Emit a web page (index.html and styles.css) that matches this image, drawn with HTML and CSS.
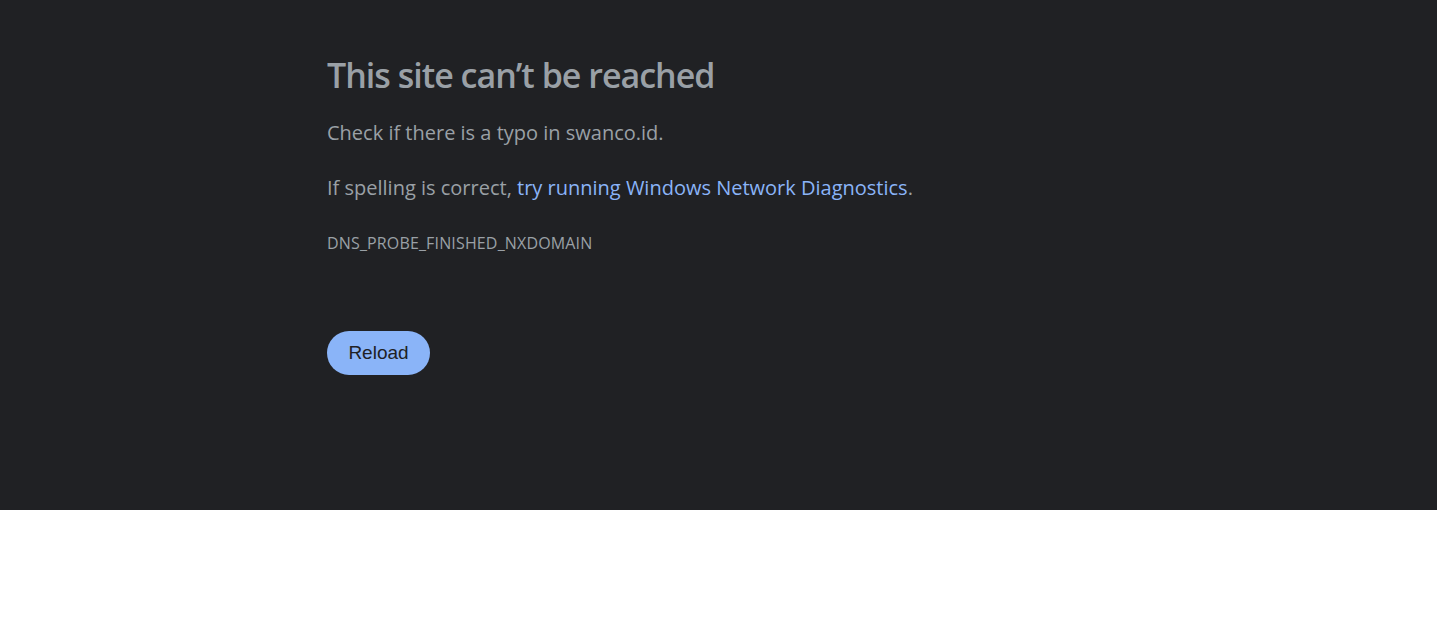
FILE: index.html
```html
<!DOCTYPE html>
<html lang="en">
<head>
<meta charset="utf-8">
<title>swanco.id</title>
<link rel="stylesheet" href="styles.css">
</head>
<body>
<div class="page">
  <div class="wrapper">
    <h1 class="title">This site can’t be reached</h1>
    <p class="line">Check if there is a typo in swanco.id.</p>
    <p class="line">If spelling is correct, <a class="link" href="#">try running Windows Network Diagnostics</a>.</p>
    <div class="code">DNS_PROBE_FINISHED_NXDOMAIN</div>
    <div class="actions">
      <button class="reload">Reload</button>
    </div>
  </div>
</div>
</body>
</html>
```
FILE: styles.css
```css
html, body {
  margin: 0;
  padding: 0;
  background: #ffffff;
}
.page {
  width: 1437px;
  height: 510px;
  background: #202124;
  box-sizing: border-box;
  padding-top: 52px;
  padding-left: 327px;
  font-family: "Open Sans", "Noto Sans", sans-serif;
}
.wrapper {
  display: flex;
  flex-direction: column;
  align-items: flex-start;
}
.title {
  margin: 0;
  font-size: 34px;
  font-weight: 600;
  line-height: 46px;
  color: #9aa0a6;
  letter-spacing: -1px;
}
.line {
  margin: 14px 0 0;
  font-size: 20px;
  line-height: 41px;
  color: #9aa0a6;
}
.line + .line {
  margin-top: 14px;
}
.link {
  color: #8ab4f8;
  text-decoration: none;
}
.code {
  margin-top: 15px;
  font-size: 16px;
  line-height: 41px;
  color: #9aa0a6;
  letter-spacing: 0.15px;
}
.actions {
  margin-top: 67px;
}
.reload {
  border: none;
  background: #8ab4f8;
  color: #202124;
  font-family: "Liberation Sans", Arial, sans-serif;
  font-size: 19px;
  height: 44px;
  width: 103px;
  border-radius: 22px;
  padding: 0;
}
```
